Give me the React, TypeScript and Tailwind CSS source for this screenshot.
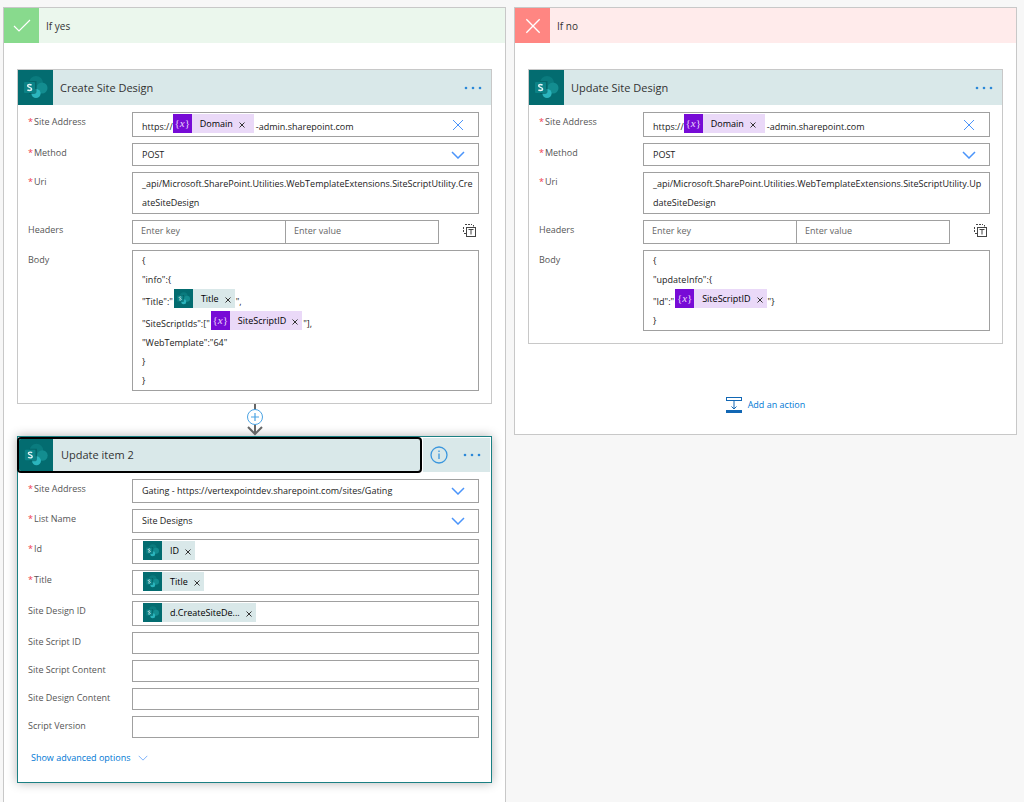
import React, { useId, useState } from "react";

type TokenKind = "variable" | "sharepoint";

// --- Icons ---
function SharePointIcon({ className }: { className: string }) {
  return (
    <svg viewBox="0 0 35 35" className={className} aria-hidden="true">
      <rect width="35" height="35" fill="#036c70" />
      <circle cx="18" cy="13" r="7" fill="#0a7b7e" />
      <circle cx="24" cy="18" r="5.5" fill="#138d90" />
      <circle cx="18" cy="23.5" r="4.6" fill="#2bb5bd" />
      <path d="M11 11h7.5v10.5c0 1.5-1 2.5-2.5 2.5h-5z" fill="#04595c" opacity=".6" />
      <rect x="6" y="12" width="11" height="11" rx="1" fill="#0b8387" />
      <path
        d="M13.600 15.100c-.6-.4-1.300-.6-2.100-.6-1.200 0-1.900.5-1.900 1.300 0 1.800 4 1.300 4 3.200 0 1-.9 1.500-2.100 1.500-.8 0-1.600-.2-2.100-.6"
        fill="none"
        stroke="#e6f4f4"
        strokeWidth="1.4"
      />
    </svg>
  );
}

function VariableIcon() {
  return (
    <span className="flex h-[19px] w-[19px] shrink-0 items-center justify-center bg-[#770bd6] font-['Liberation_Serif',serif] text-[11px] leading-none text-[#ead6fb]">
      {"{"}
      <i>x</i>
      {"}"}
    </span>
  );
}

function Chevron({ className }: { className: string }) {
  return (
    <svg viewBox="0 0 14 8" className={className} fill="none" stroke="currentColor" aria-hidden="true">
      <path d="M1 1l6 6 6-6" />
    </svg>
  );
}

function Cross({ className }: { className: string }) {
  return (
    <svg viewBox="0 0 12 12" className={className} fill="none" stroke="currentColor" aria-hidden="true">
      <path d="M1 1l10 10M11 1L1 11" />
    </svg>
  );
}

function Dots() {
  return (
    <button className="flex h-full w-9 items-center justify-center text-[#2b88d8]" aria-label="More commands">
      <svg viewBox="0 0 18 4" className="h-1 w-[18px]" fill="currentColor" aria-hidden="true">
        <circle cx="2" cy="2" r="1.3" />
        <circle cx="9" cy="2" r="1.3" />
        <circle cx="16" cy="2" r="1.3" />
      </svg>
    </button>
  );
}

function SwitchModeIcon() {
  return (
    <svg viewBox="0 0 13 13" className="h-[13px] w-[13px]" fill="none" stroke="#444" aria-hidden="true">
      <path d="M.5 8V2.500M2 .5h7" strokeDasharray="2 1" />
      <path d="M10.500 1v1.500M1 9.500h2" />
      <rect x="3.500" y="3.500" width="9" height="9" />
      <path d="M5.500 5.500h5M8 5.500v5" />
    </svg>
  );
}

// --- Form parts ---
function Token({ kind, label, wide }: { kind: TokenKind; label: string; wide?: boolean }) {
  const isVar = kind === "variable";
  return (
    <span
      className={`flex h-[19px] shrink-0 items-center whitespace-nowrap text-black ${isVar ? "bg-[#ead9f8]" : "bg-[#d9e8e9]"}`}
    >
      {isVar ? <VariableIcon /> : <SharePointIcon className="h-[19px] w-[19px] shrink-0" />}
      <span className="pl-2">{label}</span>
      <button className={`pt-[2px] pl-[6px] text-[#333] ${wide ? "pr-[9px]" : "pr-1"}`} aria-label={`Remove ${label}`}>
        <Cross className="h-[6px] w-[6px] stroke-2" />
      </button>
    </span>
  );
}

function Field({
  label,
  required,
  htmlFor,
  children,
}: {
  label: string;
  required?: boolean;
  htmlFor: string;
  children: React.ReactNode;
}) {
  return (
    <div className="flex">
      <label
        id={`${htmlFor}-label`}
        htmlFor={htmlFor}
        className="w-[104px] shrink-0 leading-[19px] whitespace-nowrap text-[#555]"
      >
        {required && <span className="mr-px text-[#f03a4a]">*</span>}
        {label}
      </label>
      <div className="min-w-0 flex-1">{children}</div>
    </div>
  );
}

function TextField({ label }: { label: string }) {
  const id = useId();
  const [value, setValue] = useState("");
  return (
    <Field label={label} htmlFor={id}>
      <input
        id={id}
        className="block h-[22px] w-full border border-[#a0a0a0] bg-white px-[9px]"
        value={value}
        onChange={(e) => setValue(e.target.value)}
      />
    </Field>
  );
}

function UriField({ initial }: { initial: string }) {
  const id = useId();
  const [value, setValue] = useState(initial);
  return (
    <Field label="Uri" required htmlFor={id}>
      <textarea
        id={id}
        rows={2}
        className="block h-[42px] w-full resize-none overflow-hidden border border-[#a0a0a0] bg-white py-px pr-1 pl-[9px] leading-[19px] break-all"
        value={value}
        onChange={(e) => setValue(e.target.value)}
      />
    </Field>
  );
}

function SelectField({ label, value, height }: { label: string; value: string; height: string }) {
  const id = useId();
  return (
    <Field label={label} required htmlFor={id}>
      <div className="relative">
        <select
          id={id}
          className={`block w-full appearance-none border border-[#a0a0a0] bg-white px-[9px] ${height}`}
        >
          <option>{value}</option>
        </select>
        <Chevron className="pointer-events-none absolute top-2 right-[14px] h-2 w-[14px] stroke-[1.5] text-[#4a94fa]" />
      </div>
    </Field>
  );
}

function TokenField({ label, required, token }: { label: string; required?: boolean; token: string }) {
  const id = useId();
  return (
    <Field label={label} required={required} htmlFor={id}>
      <div
        id={id}
        role="textbox"
        aria-labelledby={`${id}-label`}
        className="flex h-[25px] border border-[#a0a0a0] bg-white py-px pl-[10px]"
      >
        <Token kind="sharepoint" label={token} />
      </div>
    </Field>
  );
}

function AddressField() {
  const id = useId();
  return (
    <Field label="Site Address" required htmlFor={id}>
      <div className="flex h-[25px] border border-[#a0a0a0] bg-white pt-px pr-[14px] pl-[9px]">
        <div id={id} role="textbox" aria-labelledby={`${id}-label`} className="flex flex-1">
          <span className="self-end leading-[19px]">https://</span>
          <Token kind="variable" label="Domain" wide />
          <span className="self-end pl-[2px] leading-[19px]">-admin.sharepoint.com</span>
        </div>
        <button className="text-[#4a94fa]" aria-label="Clear site address">
          <Cross className="h-3 w-3" />
        </button>
      </div>
    </Field>
  );
}

function HeadersField() {
  const id = useId();
  return (
    <Field label="Headers" htmlFor={id}>
      <div className="flex">
        <input
          id={id}
          placeholder="Enter key"
          className="h-6 w-0 flex-1 border border-[#a0a0a0] bg-white px-2 pb-[3px] placeholder:text-[#666]"
        />
        <input
          aria-label="Header value"
          placeholder="Enter value"
          className="-ml-px h-6 w-0 flex-1 border border-[#a0a0a0] bg-white px-2 pb-[3px] placeholder:text-[#666]"
        />
        <button className="flex w-10 items-center justify-end pr-[3px] pb-1" aria-label="Switch to text mode">
          <SwitchModeIcon />
        </button>
      </div>
    </Field>
  );
}

function BodyField({ children }: { children: React.ReactNode }) {
  const id = useId();
  return (
    <Field label="Body" htmlFor={id}>
      <div
        id={id}
        role="textbox"
        aria-multiline="true"
        aria-labelledby={`${id}-label`}
        className="border border-[#a0a0a0] bg-white px-[9px] leading-[19px]"
      >
        {children}
      </div>
    </Field>
  );
}

function TokenLine({
  before,
  after,
  kind,
  label,
}: {
  before: string;
  after: string;
  kind: TokenKind;
  label: string;
}) {
  return (
    <div className="flex h-[22px] gap-px">
      <span className="self-end">{before}</span>
      <Token kind={kind} label={label} />
      <span className="self-end">{after}</span>
    </div>
  );
}

// --- Cards ---
function HttpCard({ title, uri, children }: { title: string; uri: string; children: React.ReactNode }) {
  return (
    <section className="border border-[#c8c8c8] bg-white">
      <header className="flex h-[35px] items-center bg-[#d9e8e9]">
        <SharePointIcon className="h-[35px] w-[35px]" />
        <h2 className="flex-1 pt-[2px] pl-[7px] text-[11px] text-[#333]">{title}</h2>
        <Dots />
      </header>
      <div className="flex flex-col gap-[6px] pt-[7px] pr-3 pb-3 pl-[10px]">
        <AddressField />
        <SelectField label="Method" value="POST" height="h-[23px]" />
        <UriField initial={uri} />
        <HeadersField />
        <BodyField>{children}</BodyField>
      </div>
    </section>
  );
}

function Connector() {
  return (
    <div className="flex h-8 justify-center">
      <svg viewBox="0 0 18 32" className="h-8 w-[18px]" fill="none" aria-hidden="true">
        <path d="M9 0v29" stroke="#666" strokeWidth="2" />
        <path d="M2 23l7 7 7-7" stroke="#666" strokeWidth="2" />
        <circle cx="9" cy="13" r="7.500" fill="#fff" stroke="#4ba3e3" />
        <path d="M9 9v8M5 13h8" stroke="#4ba3e3" strokeWidth="1.200" />
      </svg>
    </div>
  );
}

function UpdateItemCard() {
  return (
    <section className="border border-[#1b8083] bg-white shadow-[0_0_10px_rgba(0,0,0,0.3)]">
      <header className="flex h-9">
        <button className="-ml-px flex flex-1 items-center overflow-hidden rounded-[4px] border-2 border-black bg-[#d9e8e9] text-left text-[11px] text-[#333]">
          <SharePointIcon className="h-[34px] w-[34px]" />
          <span className="pt-px pl-2">Update item 2</span>
        </button>
        <div className="m-px flex items-center bg-[#d9e8e9]">
          <button className="flex w-[31px] justify-center" aria-label="Info">
            <svg viewBox="0 0 18 18" className="h-[18px] w-[18px]" fill="none" stroke="#3a96dd" aria-hidden="true">
              <circle cx="9" cy="9" r="8" strokeWidth="1.300" />
              <path d="M9 7.500v5.500M9 4.500v1.500" strokeWidth="1.300" />
            </svg>
          </button>
          <Dots />
        </div>
      </header>
      <div className="flex flex-col gap-[6px] pt-[6px] pr-3 pl-[10px]">
        <SelectField
          label="Site Address"
          value="Gating - https://vertexpointdev.sharepoint.com/sites/Gating"
          height="h-6"
        />
        <SelectField label="List Name" value="Site Designs" height="h-6" />
        <TokenField label="Id" required token="ID" />
        <TokenField label="Title" required token="Title" />
        <TokenField label="Site Design ID" token="d.CreateSiteDe..." />
        <TextField label="Site Script ID" />
        <TextField label="Site Script Content" />
        <TextField label="Site Design Content" />
        <TextField label="Script Version" />
      </div>
      <button className="mt-[10px] mb-[14px] ml-[13px] flex h-5 items-center gap-[7px] text-[#0078d4]">
        Show advanced options
        <Chevron className="h-[6px] w-[10px] text-[#4a94fa]" />
      </button>
    </section>
  );
}

export default function App() {
  return (
    <main className="flex min-h-screen gap-2 bg-[#f7f7f7] pt-[7px] pr-[7px] pl-[3px] font-['Open_Sans','Noto_Sans',sans-serif] text-[9px] text-[#222]">
      <section className="min-w-0 flex-1 border border-b-0 border-[#c8c8c8] bg-white">
        <header className="flex h-[35px] items-center bg-[#ebf7ed]">
          <span className="flex h-[35px] w-[35px] items-center justify-center bg-[#88da8d]">
            <svg viewBox="0 0 18 13" className="h-[13px] w-[18px]" fill="none" stroke="#fff" aria-hidden="true">
              <path d="M1 7l5 5L17 1" strokeWidth="1.200" />
            </svg>
          </span>
          <h1 className="pt-[2px] pl-[7px] text-[10px] text-[#333]">If yes</h1>
        </header>
        <div className="px-[13px] pt-[26px] pb-5">
          <HttpCard
            title="Create Site Design"
            uri="_api/Microsoft.SharePoint.Utilities.WebTemplateExtensions.SiteScriptUtility.CreateSiteDesign"
          >
            <div>{"{"}</div>
            <div>{'"info":{'}</div>
            <TokenLine before={'"Title":"'} kind="sharepoint" label="Title" after={'",'} />
            <TokenLine before={'"SiteScriptIds":["'} kind="variable" label="SiteScriptID" after={'"],'} />
            <div>{'"WebTemplate":"64"'}</div>
            <div>{"}"}</div>
            <div>{"}"}</div>
          </HttpCard>
          <Connector />
          <UpdateItemCard />
        </div>
      </section>

      <section className="min-w-0 flex-1 self-start border border-[#c8c8c8] bg-white">
        <header className="flex h-[35px] items-center bg-[#ffebeb]">
          <span className="flex h-[35px] w-[35px] items-center justify-center bg-[#ff8682] text-white">
            <Cross className="h-4 w-4" />
          </span>
          <h1 className="pt-[2px] pl-[7px] text-[10px] text-[#333]">If no</h1>
        </header>
        <div className="px-[13px] pt-[26px]">
          <HttpCard
            title="Update Site Design"
            uri="_api/Microsoft.SharePoint.Utilities.WebTemplateExtensions.SiteScriptUtility.UpdateSiteDesign"
          >
            <div>{"{"}</div>
            <div>{'"updateInfo":{'}</div>
            <TokenLine before={'"Id":"'} kind="variable" label="SiteScriptID" after={'"}'} />
            <div>{"}"}</div>
          </HttpCard>
          <div className="flex justify-center pt-[53px] pb-[21px]">
            <button className="flex items-center gap-[6px] text-[#0078d4]">
              <svg viewBox="0 0 16 16" className="h-4 w-4" fill="none" stroke="#1267b4" aria-hidden="true">
                <rect x=".5" y=".5" width="15" height="3" />
                <path d="M8 4v8M5.500 9.500L8 12l2.500-2.500" />
                <rect y="13" width="16" height="3" fill="#1267b4" stroke="none" />
              </svg>
              Add an action
            </button>
          </div>
        </div>
      </section>
    </main>
  );
}
